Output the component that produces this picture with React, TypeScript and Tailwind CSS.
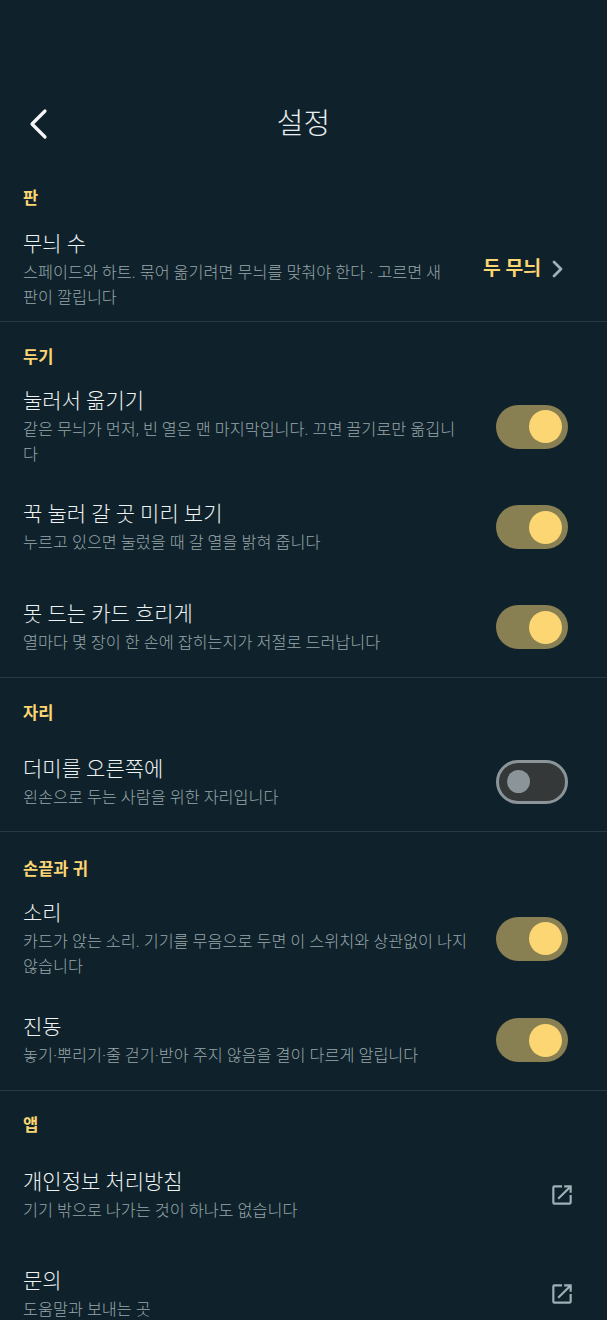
import React from "react";

function Toggle({ on }: { on: boolean }) {
  return on ? (
    <div className="flex h-[44px] w-[72px] shrink-0 items-center justify-end rounded-full bg-[#887f52] pr-[6px]">
      <div className="h-[33px] w-[33px] rounded-full bg-[#fcd673]" />
    </div>
  ) : (
    <div className="flex h-[44px] w-[72px] shrink-0 items-center rounded-full border-[3px] border-[#8b9599] bg-[#343839] pl-[8px]">
      <div className="h-[23px] w-[23px] rounded-full bg-[#8b9599]" />
    </div>
  );
}

function ExternalIcon() {
  return (
    <svg width="26" height="26" viewBox="0 0 24 24" fill="#9fb0b6" className="mr-[-7px] shrink-0">
      <path d="M19 19H5V5h7V3H5a2 2 0 0 0-2 2v14a2 2 0 0 0 2 2h14c1.100 0 2-.9 2-2v-7h-2v7zM14 3v2h3.590l-9.830 9.830 1.410 1.410L19 6.410V10h2V3h-7z" />
    </svg>
  );
}

function Row({ title, desc, right, cls, col = "w-[446px]" }: { title: string; desc: string; right: React.ReactNode; cls: string; col?: string }) {
  return (
    <div className={`flex items-center pl-[23px] pr-[39px] ${cls}`}>
      <div className={`shrink-0 pt-[1px] ${col}`}>
        <div className="text-[21px] font-light leading-[28px] text-[#eef2f3]">{title}</div>
        <div className="mt-[2px] text-[16.300px] font-light leading-[25px] text-[#98a6aa]">{desc}</div>
      </div>
      <div className="flex flex-1 justify-end">{right}</div>
    </div>
  );
}

function Label({ text, h }: { text: string; h: string }) {
  return (
    <div className={`flex items-end pl-[23px] ${h}`}>
      <div className="text-[16.500px] font-bold leading-[22px] text-[#fcd673]">{text}</div>
    </div>
  );
}

function Divider() {
  return <div className="h-px bg-[#263a43]" />;
}

export default function App() {
  return (
    <div
      className="h-[1320px] w-[607px] overflow-hidden bg-[#0f222b]"
      style={{ fontFamily: 'Roboto, "Noto Sans CJK KR", sans-serif' }}
    >
      <div className="flex h-[175px] items-end pb-[29px]">
        <div className="relative flex h-[44px] w-full items-center justify-center">
          <svg width="24" height="36" viewBox="0 0 24 36" fill="none" stroke="#f4f6f7" strokeWidth="3.200" strokeLinecap="round" strokeLinejoin="round" className="absolute left-[27px] top-[4px]">
            <path d="M18 5 5 18l13 13" />
          </svg>
          <div className="text-[29px] font-light leading-[44px] text-[#e8edef]">설정</div>
        </div>
      </div>
      <Label text="판" h="h-[35px]" />
      <Row
        cls="h-[111px] pt-[7px]"
        col="w-[430px]"
        title="무늬 수"
        desc="스페이드와 하트. 묶어 옮기려면 무늬를 맞춰야 한다 · 고르면 새 판이 깔립니다"
        right={
          <div className="flex items-center text-[#fcd673]">
            <span className="text-[19.300px] font-bold leading-[26px]">두 무늬</span>
            <svg width="16" height="20" viewBox="0 0 16 20" fill="none" stroke="#9fb0b6" strokeWidth="2.800" strokeLinecap="round" strokeLinejoin="round" className="ml-[9px] mr-[2px]">
              <path d="M4 3l7 7-7 7" />
            </svg>
          </div>
        }
      />
      <Divider />
      <Label text="두기" h="h-[47px]" />
      <Row cls="h-[108px] pt-[7px]" title="눌러서 옮기기" desc="같은 무늬가 먼저, 빈 열은 맨 마지막입니다. 끄면 끌기로만 옮깁니다" right={<Toggle on />} />
      <Row cls="h-[100px]" title="꾹 눌러 갈 곳 미리 보기" desc="누르고 있으면 눌렀을 때 갈 열을 밝혀 줍니다" right={<Toggle on />} />
      <Row cls="h-[100px]" title="못 드는 카드 흐리게" desc="열마다 몇 장이 한 손에 잡히는지가 저절로 드러납니다" right={<Toggle on />} />
      <Divider />
      <Label text="자리" h="h-[47px]" />
      <Row cls="h-[106px] pt-[7px]" title="더미를 오른쪽에" desc="왼손으로 두는 사람을 위한 자리입니다" right={<Toggle on={false} />} />
      <Divider />
      <Label text="손끝과 귀" h="h-[49px]" />
      <Row cls="h-[109px] pt-[6px]" title="소리" desc="카드가 앉는 소리. 기기를 무음으로 두면 이 스위치와 상관없이 나지 않습니다" right={<Toggle on />} />
      <Row cls="h-[100px]" title="진동" desc="놓기·뿌리기·줄 걷기·받아 주지 않음을 결이 다르게 알립니다" right={<Toggle on />} />
      <Divider />
      <Label text="앱" h="h-[46px]" />
      <Row cls="h-[107px] pt-[8px]" title="개인정보 처리방침" desc="기기 밖으로 나가는 것이 하나도 없습니다" right={<ExternalIcon />} />
      <Row cls="h-[100px]" title="문의" desc="도움말과 보내는 곳" right={<ExternalIcon />} />
    </div>
  );
}
